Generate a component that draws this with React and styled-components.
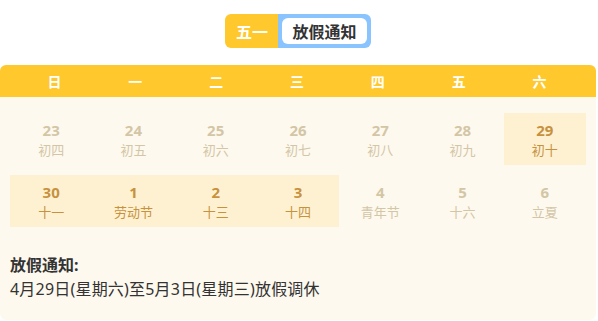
import React from 'react'
import styled, { createGlobalStyle } from 'styled-components'

const Global = createGlobalStyle`
  body {
    margin: 0;
    background: #fff;
    font-family: "Noto Sans", "Noto Sans CJK SC", sans-serif;
  }
`

const Wrap = styled.div`
  width: 596px;
  padding-top: 14px;
`

const Tabs = styled.div`
  display: flex;
  justify-content: center;
  margin-bottom: 17px;
`

const TabGroup = styled.div`
  display: flex;
  height: 34px;
  border-radius: 6px;
  overflow: hidden;
`

const TabYellow = styled.div`
  width: 53px;
  background: #ffc82c;
  color: #fff;
  font-weight: 700;
  font-size: 16px;
  display: flex;
  align-items: center;
  justify-content: center;
`

const TabBlue = styled.div`
  background: #8ac4ff;
  padding: 4px;
  display: flex;
`

const TabInner = styled.div`
  background: #fff;
  border-radius: 6px;
  padding: 0 10px;
  color: #333;
  font-weight: 700;
  font-size: 16px;
  display: flex;
  align-items: center;
`

const Header = styled.div`
  display: grid;
  grid-template-columns: repeat(7, 1fr);
  height: 32px;
  background: #ffc82c;
  border-radius: 6px 6px 0 0;
  padding: 0 16px 0 14px;
`

const WeekDay = styled.div`
  color: #fff;
  font-weight: 700;
  font-size: 14px;
  display: flex;
  align-items: center;
  justify-content: center;
`

const Panel = styled.div`
  background: #fef9ee;
  border-radius: 0 0 7px 7px;
  padding: 16px 10px 18px;
`

const Grid = styled.div`
  display: grid;
  grid-template-columns: repeat(7, 1fr);
  row-gap: 10px;
`

const Cell = styled.div`
  height: 52px;
  display: flex;
  flex-direction: column;
  align-items: center;
  justify-content: center;
  background: ${p => (p.$on ? '#fdf1d2' : 'transparent')};
  color: ${p => (p.$on ? '#c8913e' : '#d3c6a6')};
`

const Num = styled.div`
  font-size: 15px;
  font-weight: 700;
  line-height: 20px;
`

const Lunar = styled.div`
  font-size: 13px;
  line-height: 18px;
  margin-top: 1px;
`

const Notice = styled.div`
  margin-top: 27px;
  color: #333;
`

const NoticeTitle = styled.div`
  font-size: 16px;
  font-weight: 700;
  line-height: 22px;
`

const NoticeText = styled.div`
  font-size: 16px;
  line-height: 26px;
  letter-spacing: 0.2px;
`

const weekdays = ['日', '一', '二', '三', '四', '五', '六']

const days = [
  ['23', '初四'], ['24', '初五'], ['25', '初六'], ['26', '初七'], ['27', '初八'], ['28', '初九'], ['29', '初十', true],
  ['30', '十一', true], ['1', '劳动节', true], ['2', '十三', true], ['3', '十四', true], ['4', '青年节'], ['5', '十六'], ['6', '立夏'],
]

export default function App() {
  return (
    <>
      <Global />
      <Wrap>
        <Tabs>
          <TabGroup>
            <TabYellow>五一</TabYellow>
            <TabBlue>
              <TabInner>放假通知</TabInner>
            </TabBlue>
          </TabGroup>
        </Tabs>
        <Header>
          {weekdays.map(w => <WeekDay key={w}>{w}</WeekDay>)}
        </Header>
        <Panel>
          <Grid>
            {days.map(([n, l, on]) => (
              <Cell key={n} $on={on}>
                <Num>{n}</Num>
                <Lunar>{l}</Lunar>
              </Cell>
            ))}
          </Grid>
          <Notice>
            <NoticeTitle>放假通知:</NoticeTitle>
            <NoticeText>4月29日(星期六)至5月3日(星期三)放假调休</NoticeText>
          </Notice>
        </Panel>
      </Wrap>
    </>
  )
}
